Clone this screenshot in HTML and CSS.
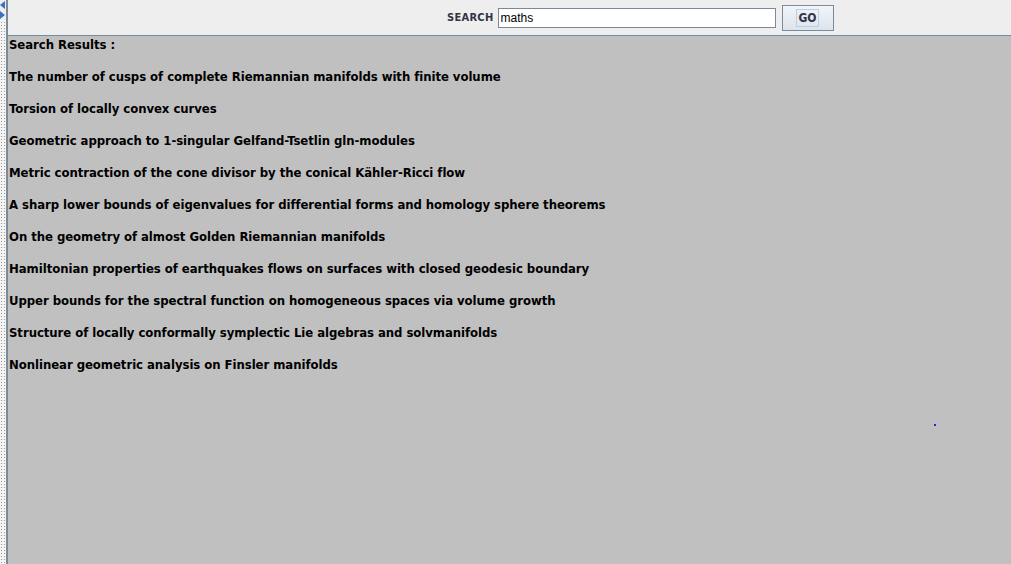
FILE: index.html
```html
<!DOCTYPE html>
<html>
<head>
<meta charset="utf-8">
<link rel="stylesheet" href="styles.css">
</head>
<body>
<div class="app">
  <div class="divider">
    <svg class="arrows" width="6" height="20" viewBox="0 0 6 20">
      <path d="M0 5 L5 1 L5 9 Z" fill="#3c6fc4"/>
      <path d="M0 11 L5 15 L0 19 Z" fill="#3c6fc4"/>
    </svg>
  </div>
  <div class="edge"></div>
  <div class="main">
    <div class="toolbar">
      <span class="label">SEARCH</span>
      <input class="field" type="text" value="maths">
      <button class="go"><span class="go-text">GO</span></button>
    </div>
    <div class="results">
      <div class="row">Search Results :</div>
      <div class="row">The number of cusps of complete Riemannian manifolds with finite volume</div>
      <div class="row">Torsion of locally convex curves</div>
      <div class="row">Geometric approach to 1-singular Gelfand-Tsetlin gln-modules</div>
      <div class="row">Metric contraction of the cone divisor by the conical Kähler-Ricci flow</div>
      <div class="row">A sharp lower bounds of eigenvalues for differential forms and homology sphere theorems</div>
      <div class="row">On the geometry of almost Golden Riemannian manifolds</div>
      <div class="row">Hamiltonian properties of earthquakes flows on surfaces with closed geodesic boundary</div>
      <div class="row">Upper bounds for the spectral function on homogeneous spaces via volume growth</div>
      <div class="row">Structure of locally conformally symplectic Lie algebras and solvmanifolds</div>
      <div class="row">Nonlinear geometric analysis on Finsler manifolds</div>
      <span class="dot"></span>
    </div>
  </div>
</div>
</body>
</html>
```
FILE: styles.css
```css
html, body {
  margin: 0;
  padding: 0;
  width: 1011px;
  height: 564px;
  overflow: hidden;
}
.app {
  display: flex;
  height: 564px;
}
.divider {
  width: 6px;
  background-color: #f4f4f4;
  background-image: radial-gradient(circle, #9a9a9a 0.6px, transparent 0.9px);
  background-size: 3px 3px;
  background-position: 0 0;
  position: relative;
}
.arrows {
  position: absolute;
  left: 0;
  top: 0;
  background: #eeeeee;
}
.edge {
  width: 2px;
  background: #7a8a99;
}
.main {
  flex: 1;
  display: flex;
  flex-direction: column;
}
.toolbar {
  background: #eeeeee;
  border-bottom: 1px solid #7a8a99;
  display: flex;
  align-items: center;
  padding-left: 439px;
  box-sizing: border-box;
  height: 36px;
}
.label {
  font-family: "DejaVu Sans Condensed", "DejaVu Sans", sans-serif;
  font-weight: bold;
  font-size: 11px;
  color: #333344;
  margin-right: 4px;
  letter-spacing: 0.3px;
}
.field {
  width: 278px;
  height: 20px;
  box-sizing: border-box;
  border: 1px solid #7a8a99;
  background: #fff;
  font-family: "Liberation Sans", Arial, sans-serif;
  font-size: 12px;
  padding: 0 2px;
  margin: 0;
  outline: none;
  color: #000;
}
.go {
  margin-left: 6px;
  width: 52px;
  height: 26px;
  box-sizing: border-box;
  border: 1px solid #7a8a99;
  background: linear-gradient(#f2f5f9, #dbe3ec);
  padding: 0;
  display: flex;
  align-items: center;
  justify-content: center;
}
.go-text {
  font-family: "DejaVu Sans Condensed", "DejaVu Sans", sans-serif;
  font-weight: bold;
  font-size: 12px;
  color: #333344;
  border: 1px solid #b8cfe5;
  padding: 1px 1px;
}
.results {
  flex: 1;
  background: #c0c0c0;
  padding: 1px 0 0 1px;
  position: relative;
}
.row {
  font-family: "DejaVu Sans Condensed", "DejaVu Sans", sans-serif;
  font-weight: bold;
  font-size: 13px;
  letter-spacing: -0.05px;
  color: #000;
  height: 32px;
  line-height: 16px;
}
.dot {
  position: absolute;
  left: 926px;
  top: 388px;
  width: 2px;
  height: 2px;
  background: #2020ff;
}
```
